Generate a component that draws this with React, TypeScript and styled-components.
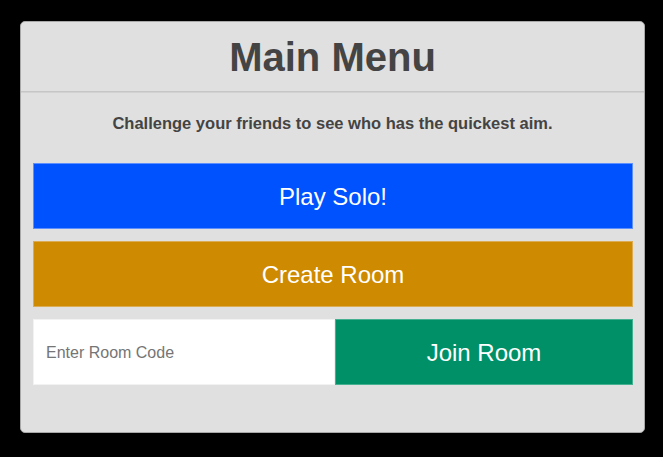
import React from "react";
import styled, { createGlobalStyle } from "styled-components";

const Global = createGlobalStyle`
  html, body { margin: 0; padding: 0; background: #000; }
  body { font-family: "Liberation Sans", Arial, sans-serif; }
  * { box-sizing: border-box; }
`;

const Page = styled.div`
  width: 663px;
  height: 457px;
  padding: 21px 18px 0 20px;
  background: #000;
`;

const Card = styled.div`
  width: 625px;
  height: 412px;
  background: #e0e0e0;
  border: 1px solid #a8a8a8;
  border-radius: 5px;
  display: flex;
  flex-direction: column;
  align-items: center;
`;

const Header = styled.div`
  width: 100%;
  padding: 12px 0 11px;
  border-bottom: 1px solid #c6c6c6;
  box-shadow: 0 1px 0 #d2d2d2;
`;

const Title = styled.h1`
  margin: 0;
  text-align: center;
  font-size: 40px;
  font-weight: bold;
  color: #444;
  line-height: 46px;
`;

const Subtitle = styled.p`
  margin: 22px 0 31px;
  font-size: 16.5px;
  font-weight: bold;
  color: #444;
  line-height: 18px;
  text-align: center;
`;

const Stack = styled.div`
  width: 600px;
  margin-left: 1px;
  display: flex;
  flex-direction: column;
  gap: 12px;
`;

const ActionButton = styled.button<{ $bg: string; $edge: string }>`
  height: 66px;
  width: 100%;
  border: 1px solid ${(p) => p.$edge};
  background: ${(p) => p.$bg};
  color: #fff;
  font-family: "Liberation Sans", Arial, sans-serif;
  font-size: 24px;
  padding: 2px 0 0;
  cursor: pointer;
`;

const JoinRow = styled.div`
  display: flex;
  height: 66px;
`;

const CodeInput = styled.input`
  width: 302px;
  height: 66px;
  border: 1px solid #f2f2f2;
  background: #fff;
  padding: 2px 12px 0;
  font-family: "Liberation Sans", Arial, sans-serif;
  font-size: 16px;
  color: #333;
  outline: none;
  &::placeholder { color: #757575; }
`;

const JoinButton = styled(ActionButton)`
  width: 298px;
`;

export default function App() {
  return (
    <>
      <Global />
      <Page>
        <Card>
          <Header>
            <Title>Main Menu</Title>
          </Header>
          <Subtitle>Challenge your friends to see who has the quickest aim.</Subtitle>
          <Stack>
            <ActionButton $bg="#0052ff" $edge="#5e8fff">Play Solo!</ActionButton>
            <ActionButton $bg="#ce8a00" $edge="#dcac55">Create Room</ActionButton>
            <JoinRow>
              <CodeInput placeholder="Enter Room Code" />
              <JoinButton $bg="#009068" $edge="#45b08f">Join Room</JoinButton>
            </JoinRow>
          </Stack>
        </Card>
      </Page>
    </>
  );
}
